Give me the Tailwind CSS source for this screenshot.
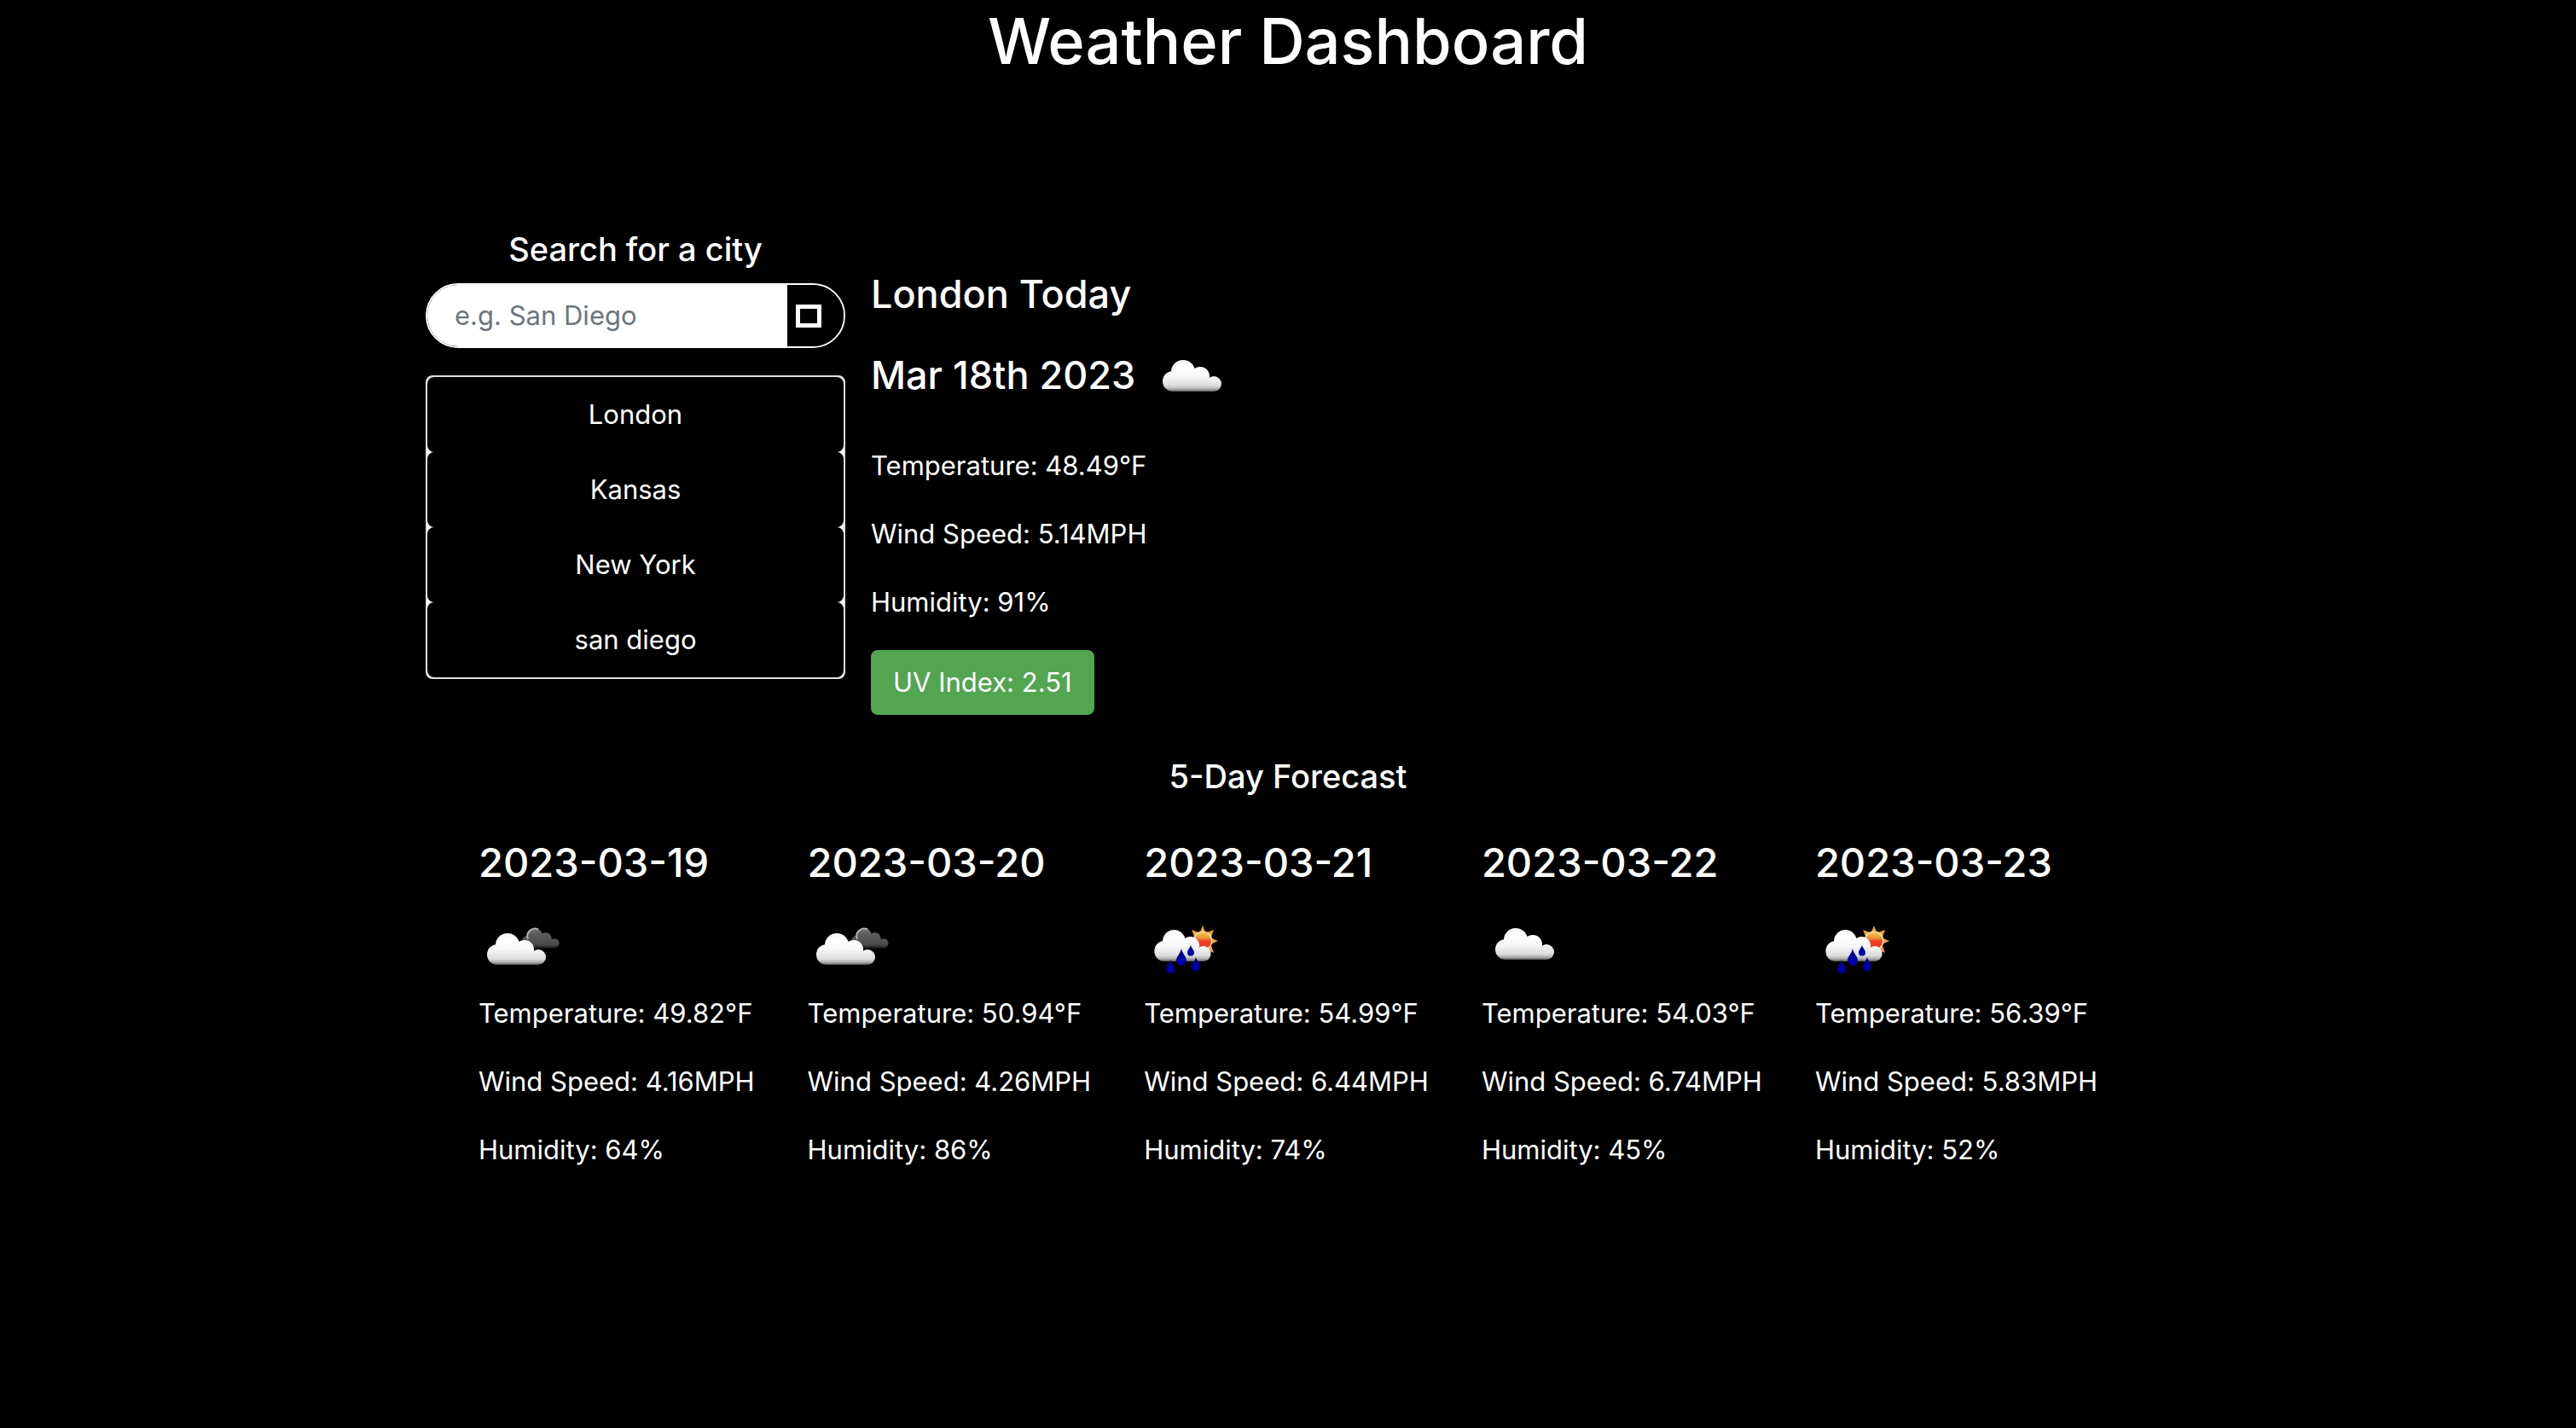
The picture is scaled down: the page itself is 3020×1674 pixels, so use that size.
<!DOCTYPE html>
<html lang="en">
<head>
<meta charset="utf-8">
<meta name="viewport" content="width=device-width, initial-scale=1">
<title>Weather Dashboard</title>
<script src="https://cdn.jsdelivr.net/npm/@tailwindcss/browser@4"></script>
</head>
<body class="min-h-screen bg-black font-['Inter',sans-serif] text-[31px] leading-[48px] text-white">
<svg class="absolute size-0" aria-hidden="true">
  <defs>
    <linearGradient id="cloud-fill" gradientUnits="userSpaceOnUse" x1="0" y1="32" x2="0" y2="70">
      <stop offset="0" stop-color="#f4f4f4"/><stop offset=".2" stop-color="#fff"/><stop offset=".5" stop-color="#f8f8f8"/><stop offset=".8" stop-color="#dcdcdc"/><stop offset=".9" stop-color="#aaa"/><stop offset="1" stop-color="#3a3a3a"/>
    </linearGradient>
    <linearGradient id="dark-fill" gradientUnits="userSpaceOnUse" x1="0" y1="32" x2="0" y2="70">
      <stop offset="0" stop-color="#777"/><stop offset=".3" stop-color="#5c5c5c"/><stop offset=".8" stop-color="#4a4a4a"/><stop offset="1" stop-color="#161616"/>
    </linearGradient>
    <linearGradient id="sun-fill" x1="0" y1="0" x2="0" y2="1">
      <stop offset="0" stop-color="#f6c244"/><stop offset=".3" stop-color="#f29a3a"/><stop offset=".55" stop-color="#ee3a24"/><stop offset="1" stop-color="#ee3a24"/>
    </linearGradient>
    <radialGradient id="drop-fill" cx=".5" cy=".7" r=".5">
      <stop offset="0" stop-color="#0000d0"/><stop offset="1" stop-color="#00007c"/>
    </radialGradient>
    <g id="cloud-shape">
      <circle cx="28" cy="57" r="12"/><circle cx="40" cy="46" r="14"/><circle cx="60" cy="51" r="11"/><circle cx="76" cy="60" r="9"/><rect x="28" y="48" width="40" height="21"/><rect x="62" y="58" width="14" height="11"/>
    </g>
    <path id="drop" d="M0-10C1-4 6-1 6 4A6 6 0 0 1-6 4C-6-1-1-4 0-10Z" fill="url(#drop-fill)"/>
    <symbol id="cloudy" viewBox="0 0 100 100"><use href="#cloud-shape" fill="url(#cloud-fill)"/></symbol>
    <symbol id="overcast" viewBox="0 0 100 100">
      <g transform="translate(41 12) scale(.63)"><use href="#cloud-shape" fill="url(#dark-fill)"/><path d="M27 52A14 14 0 0 1 46 34" fill="none" stroke="#b8b8b8" stroke-width="3"/></g>
      <g transform="translate(-6 6)"><use href="#cloud-shape" fill="url(#cloud-fill)"/></g>
    </symbol>
    <symbol id="showers" viewBox="0 0 100 100">
      <path d="M69 29L72.400 37.500 82 34 78.500 43.500 87 47 78.500 51 82 61 72 57 69 65 65 57 56 60 59.500 51 51 47 59.500 43 56 34 65.500 37.500Z" fill="#eea03c"/>
      <circle cx="69" cy="47" r="11.500" fill="#f8dfa0"/><circle cx="69" cy="47" r="10" fill="url(#sun-fill)"/>
      <g transform="translate(-3 2) scale(.96 1)"><use href="#cloud-shape" fill="url(#cloud-fill)"/></g>
      <use href="#drop" transform="translate(44 66)"/>
      <use href="#drop" transform="translate(55 58) scale(.66)"/>
      <use href="#drop" transform="translate(31 77) scale(.82)"/>
      <use href="#drop" transform="translate(61 74) scale(.82)"/>
    </symbol>
  </defs>
</svg>

<header>
  <h1 class="text-center text-[74px] leading-[96px] font-medium">Weather Dashboard</h1>
</header>

<main class="mx-auto mt-[172px] max-w-[2022px]">
  <div class="flex gap-[30px]">
    <aside class="w-[492px] shrink-0">
      <form>
        <label for="city" class="mb-4 block text-center text-[38px] font-medium">Search for a city</label>
        <div class="flex h-[76px] overflow-hidden rounded-full border-2 border-white">
          <input id="city" type="text" placeholder="e.g. San Diego" class="min-w-0 flex-1 bg-white pl-8 text-black placeholder:text-[#6c757d]">
          <button type="button" aria-label="Search" class="flex w-[66px] items-center bg-black pl-[10px]">
            <svg class="h-[27px] w-[30px]" viewBox="0 0 30 27" fill="none" stroke="#fff" stroke-width="5"><path d="M2.500 2.500h25v22h-25z"/></svg>
          </button>
        </div>
      </form>
      <div class="mt-8 flex flex-col rounded-lg border-2 border-[#dfdfdf] bg-white">
        <button type="button" class="h-[88px] rounded-lg bg-black">London</button>
        <button type="button" class="h-[88px] rounded-lg bg-black">Kansas</button>
        <button type="button" class="h-[88px] rounded-lg bg-black">New York</button>
        <button type="button" class="h-[88px] rounded-lg bg-black">san diego</button>
      </div>
    </aside>

    <section class="flex flex-col items-start gap-8 pt-12">
      <div>
        <h2 class="mb-4 text-[45px] leading-[58px] font-medium">London Today</h2>
        <h2 class="flex items-center gap-4 text-[45px] leading-[58px] font-medium">Mar 18th 2023
          <svg class="size-[100px]" role="img" aria-label="Cloudy"><use href="#cloudy"/></svg>
        </h2>
      </div>
      <p>Temperature: 48.49°F</p>
      <p>Wind Speed: 5.14MPH</p>
      <p>Humidity: 91%</p>
      <button type="button" class="h-[76px] rounded-lg bg-[#54a551] px-[26px]">UV Index: 2.51</button>
    </section>
  </div>

  <section class="mt-12">
    <h3 class="text-center text-[38px] font-medium">5-Day Forecast</h3>
    <div class="mt-12 flex justify-center gap-[62px]">
      <article class="flex flex-col gap-8">
        <div><h2 class="mb-4 text-[47px] leading-[58px] font-medium">2023-03-19</h2>
        <svg class="-mb-6 size-[100px]" role="img" aria-label="Overcast"><use href="#overcast"/></svg></div>
        <p>Temperature: 49.82°F</p><p>Wind Speed: 4.16MPH</p><p>Humidity: 64%</p>
      </article>
      <article class="flex flex-col gap-8">
        <div><h2 class="mb-4 text-[47px] leading-[58px] font-medium">2023-03-20</h2>
        <svg class="-mb-6 size-[100px]" role="img" aria-label="Overcast"><use href="#overcast"/></svg></div>
        <p>Temperature: 50.94°F</p><p>Wind Speed: 4.26MPH</p><p>Humidity: 86%</p>
      </article>
      <article class="flex flex-col gap-8">
        <div><h2 class="mb-4 text-[47px] leading-[58px] font-medium">2023-03-21</h2>
        <svg class="-mb-6 size-[100px]" role="img" aria-label="Showers"><use href="#showers"/></svg></div>
        <p>Temperature: 54.99°F</p><p>Wind Speed: 6.44MPH</p><p>Humidity: 74%</p>
      </article>
      <article class="flex flex-col gap-8">
        <div><h2 class="mb-4 text-[47px] leading-[58px] font-medium">2023-03-22</h2>
        <svg class="-mb-6 size-[100px]" role="img" aria-label="Cloudy"><use href="#cloudy"/></svg></div>
        <p>Temperature: 54.03°F</p><p>Wind Speed: 6.74MPH</p><p>Humidity: 45%</p>
      </article>
      <article class="flex flex-col gap-8">
        <div><h2 class="mb-4 text-[47px] leading-[58px] font-medium">2023-03-23</h2>
        <svg class="-mb-6 size-[100px]" role="img" aria-label="Showers"><use href="#showers"/></svg></div>
        <p>Temperature: 56.39°F</p><p>Wind Speed: 5.83MPH</p><p>Humidity: 52%</p>
      </article>
    </div>
  </section>
</main>
</body>
</html>
